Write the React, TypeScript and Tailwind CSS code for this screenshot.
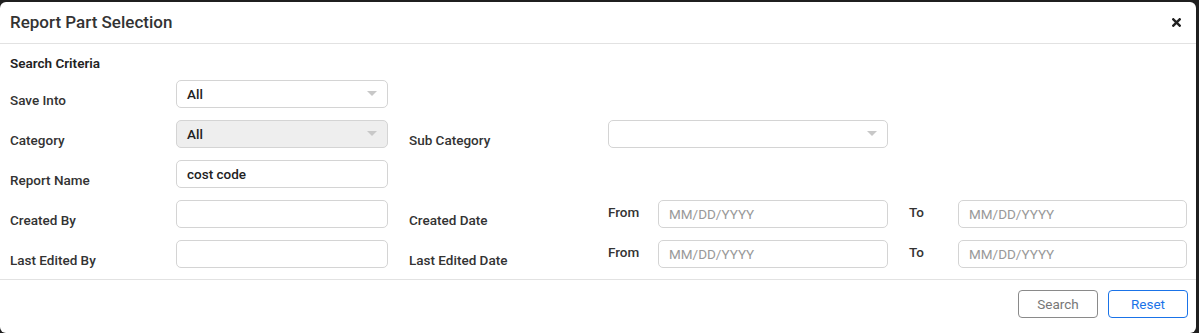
import React from 'react';

const font = { fontFamily: 'Roboto, "Liberation Sans", sans-serif' };

function Label({ text, className = '' }: { text: string; className?: string }) {
  return (
    <div className={`text-[13.5px] leading-[16px] font-medium text-[#333] mt-[12px] whitespace-nowrap ${className}`}>
      {text}
    </div>
  );
}

function Select({ value, width, disabled }: { value?: string; width: string; disabled?: boolean }) {
  return (
    <div
      className={`${width} h-[28px] rounded-[5px] border border-[#d4d4d4] flex items-center justify-between pl-[10px] pr-[10px] ${
        disabled ? 'bg-[#eeeeee]' : 'bg-white'
      }`}
    >
      <span className="text-[13.5px] font-medium text-[#222]">{value}</span>
      <svg width="10" height="6" viewBox="0 0 10 6">
        <path d="M0 0 L10 0 L5 5 Z" fill="#c8c8c8" />
      </svg>
    </div>
  );
}

function Input({ value, placeholder, width }: { value?: string; placeholder?: string; width: string }) {
  return (
    <div className={`${width} h-[28px] rounded-[5px] border border-[#d4d4d4] bg-white flex items-center pl-[10px]`}>
      {value ? (
        <span className="text-[13.5px] font-medium text-[#222]">{value}</span>
      ) : (
        <span className="text-[13.5px] text-[#999]">{placeholder}</span>
      )}
    </div>
  );
}

function DateRange() {
  return (
    <div className="flex items-start">
      <div className="w-[50px] text-[13.5px] leading-[16px] font-medium text-[#333] mt-[4px]">From</div>
      <Input placeholder="MM/DD/YYYY" width="w-[230px]" />
      <div className="w-[70px] pl-[21px] text-[13.5px] leading-[16px] font-medium text-[#333] mt-[4px]">To</div>
      <Input placeholder="MM/DD/YYYY" width="w-[229px]" />
    </div>
  );
}

export default function App() {
  return (
    <div className="w-[1199px] h-[333px] bg-[#1f1f1f] pt-[2px] pr-[3px]" style={font}>
      <div className="bg-white h-full rounded-[6px] flex flex-col">
        {/* Header */}
        <div className="h-[42px] border-b border-[#e2e2e2] flex items-center justify-between pl-[10px] pr-[15px]">
          <h1 className="text-[17px] font-medium text-[#333]">Report Part Selection</h1>
          <svg width="9" height="9" viewBox="0 0 9 9">
            <path d="M1.3 1.3 L7.7 7.7 M7.7 1.3 L1.3 7.7" stroke="#222" strokeWidth="2.4" strokeLinecap="square" />
          </svg>
        </div>

        {/* Body */}
        <div className="pl-[10px] pt-[11px] border-b border-[#e2e2e2] h-[236px]">
          <div className="text-[13.5px] leading-[16px] font-semibold text-[#222] mb-[9px]">Search Criteria</div>

          <div className="flex h-[40px]">
            <Label text="Save Into" className="w-[166px]" />
            <Select value="All" width="w-[212px]" />
          </div>

          <div className="flex h-[40px]">
            <Label text="Category" className="w-[166px]" />
            <Select value="All" width="w-[212px]" disabled />
            <Label text="Sub Category" className="w-[199px] ml-[21px]" />
            <Select width="w-[280px]" />
          </div>

          <div className="flex h-[40px]">
            <Label text="Report Name" className="w-[166px]" />
            <Input value="cost code" width="w-[212px]" />
          </div>

          <div className="flex h-[40px]">
            <Label text="Created By" className="w-[166px]" />
            <Input width="w-[212px]" />
            <Label text="Created Date" className="w-[199px] ml-[21px]" />
            <DateRange />
          </div>

          <div className="flex h-[40px]">
            <Label text="Last Edited By" className="w-[166px]" />
            <Input width="w-[212px]" />
            <Label text="Last Edited Date" className="w-[199px] ml-[21px]" />
            <DateRange />
          </div>
        </div>

        {/* Footer */}
        <div className="flex justify-end gap-[10px] pt-[10px] pr-[8px]">
          <button className="w-[80px] h-[28px] rounded-[4px] border border-[#8a8a8a] text-[13.5px] text-[#777] bg-white">
            Search
          </button>
          <button className="w-[80px] h-[28px] rounded-[4px] border border-[#1a73e8] text-[13.5px] text-[#1a73e8] bg-white">
            Reset
          </button>
        </div>
      </div>
    </div>
  );
}
